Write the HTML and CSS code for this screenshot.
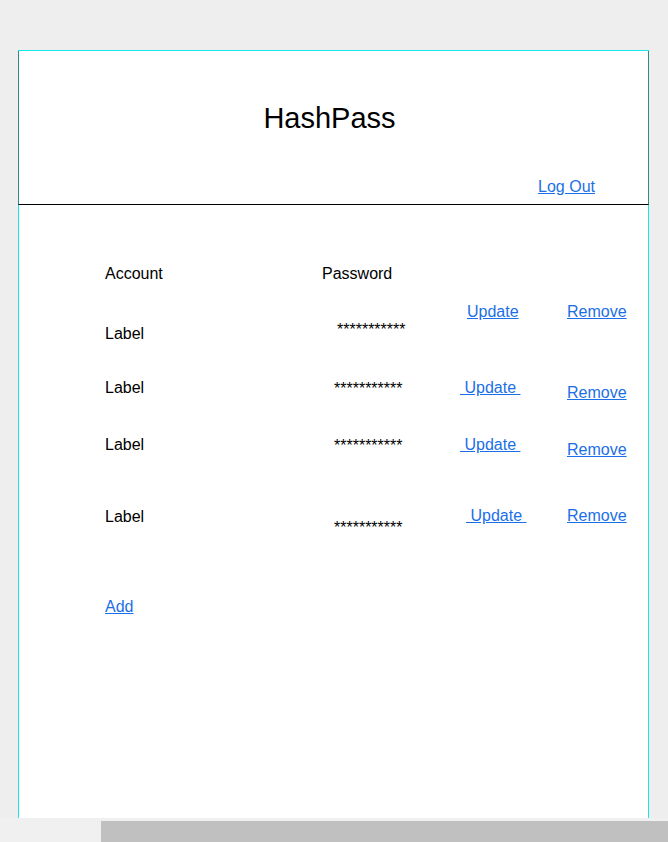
FILE: index.html
```html
<!DOCTYPE html>
<html>
<head>
<meta charset="utf-8">
<title>HashPass</title>
<link rel="stylesheet" href="styles.css">
</head>
<body>
<div class="card">
  <header class="top">
    <h1 class="title">HashPass</h1>
    <a class="logout" href="#">Log Out</a>
  </header>
  <main class="content">
    <div class="row head">
      <div class="cell">Account</div>
      <div class="cell">Password</div>
    </div>
    <div class="row r1">
      <div class="cell acct dn22">Label</div>
      <div class="cell pw pad15 dn18">***********</div>
      <div class="cell act pad7"><a href="#">Update</a></div>
      <div class="cell"><a href="#">Remove</a></div>
    </div>
    <div class="row r2">
      <div class="cell acct">Label</div>
      <div class="cell pw pad12 dn1">***********</div>
      <div class="cell act"><a href="#">&nbsp;Update&nbsp;</a></div>
      <div class="cell dn5"><a href="#">Remove</a></div>
    </div>
    <div class="row r3">
      <div class="cell acct">Label</div>
      <div class="cell pw pad12 dn1">***********</div>
      <div class="cell act"><a href="#">&nbsp;Update&nbsp;</a></div>
      <div class="cell dn5"><a href="#">Remove</a></div>
    </div>
    <div class="row r4">
      <div class="cell acct dn1">Label</div>
      <div class="cell pw pad12 dn12">***********</div>
      <div class="cell act pad6"><a href="#">&nbsp;Update&nbsp;</a></div>
      <div class="cell"><a href="#">Remove</a></div>
    </div>
    <div class="add-row"><a href="#">Add</a></div>
  </main>
</div>
<div class="hscroll"><div class="thumb"></div></div>
</body>
</html>
```
FILE: styles.css
```css
html, body {
  margin: 0;
  padding: 0;
  height: 842px;
  overflow: hidden;
}
body {
  background: #eeeeee;
  font-family: "Liberation Sans", Arial, sans-serif;
  font-size: 16px;
  color: #000;
  display: flex;
  flex-direction: column;
}
a {
  color: #1b6fe6;
  text-decoration: underline;
}
.card {
  margin: 50px 19px 0 18px;
  height: 768px;
  box-sizing: border-box;
  background: #fff;
  border: 1px solid #19e6e6;
  border-bottom: none;
  display: flex;
  flex-direction: column;
}
.top {
  height: 153px;
  border-bottom: 1px solid #000;
  margin: 0 -1px;
  border-left: 1px solid #2f8a8a;
  border-right: 1px solid #2f8a8a;
  display: flex;
  flex-direction: column;
  flex-shrink: 0;
}
.title {
  margin: 51px 8px 0 0;
  font-size: 29px;
  line-height: 32px;
  font-weight: normal;
  text-align: center;
}
.logout {
  margin: auto 53px 8px auto;
  line-height: 18px;
}
.content {
  padding: 60px 0 0 86px;
  display: flex;
  flex-direction: column;
}
.row {
  display: grid;
  grid-template-columns: 217px 138px 107px auto;
  align-items: start;
  line-height: 18px;
}
.r1 { margin-top: 20px; }
.r2 { margin-top: 36px; }
.r3 { margin-top: 34px; }
.r4 { margin-top: 48px; }
.add-row {
  margin-top: 61px;
  line-height: 18px;
}
.cell { white-space: nowrap; }
.pw { font-size: 16px; }
.pad15 { padding-left: 15px; }
.pad12 { padding-left: 12px; }
.pad7 { padding-left: 7px; }
.pad6 { padding-left: 6px; }
.dn1 { margin-top: 1px; }
.dn5 { margin-top: 5px; }
.dn12 { margin-top: 12px; }
.dn18 { margin-top: 18px; }
.dn22 { margin-top: 22px; }
.hscroll {
  height: 24px;
  background: #f0f0f0;
  display: flex;
  flex-shrink: 0;
}
.thumb {
  margin: 3px 0 0 101px;
  flex: 1;
  background: #c0c0c0;
}
```
